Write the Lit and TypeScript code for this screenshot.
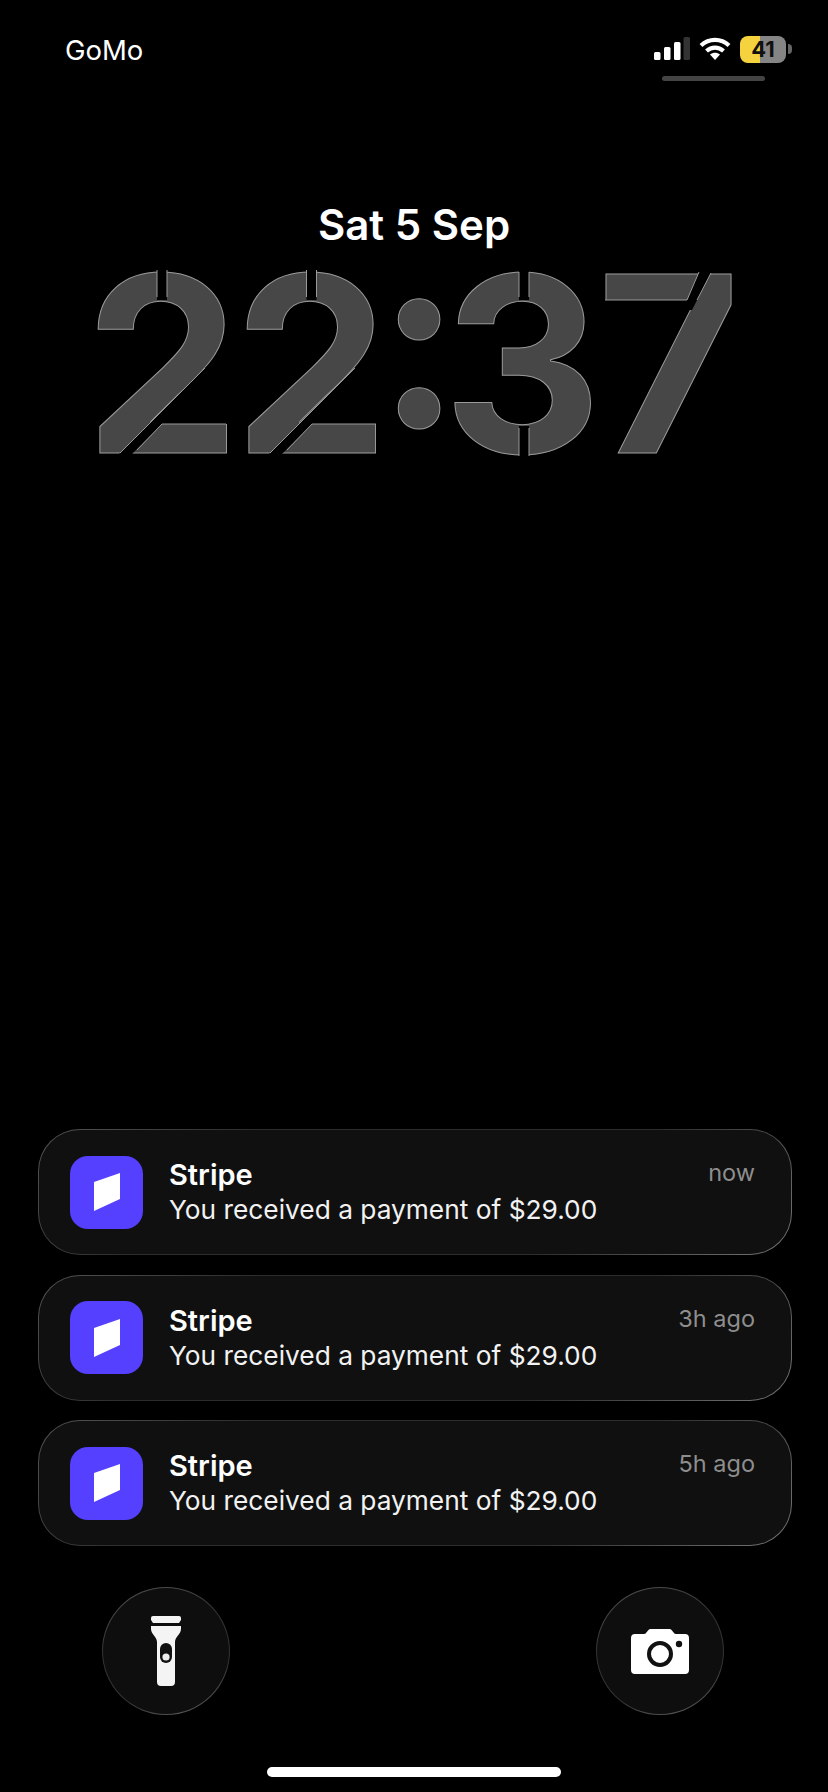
import { LitElement, html, css, svg } from "lit";
import { customElement } from "lit/decorators.js";

const NOTES = [
  { time: "now" },
  { time: "3h ago" },
  { time: "5h ago" },
];

// Stencil cuts laid over the real clock text, in page coordinates.
const SLOTS: string[] = [
  "157,262 167,262 167,300 157,300",
  "306.500,262 316.500,262 316.500,300 306.500,300",
  "519,262 529,262 529,300 519,300",
  "519,426 529,426 529,465 519,465",
  "112,461 128,458 162,424 240,424 240,333",
  "262,461 278,458 312,424 390,424 390,333",
  "703,262 716.500,262 692,310 683,310",
  "596,300 690,300 684,314 596,314",
];

// Edge highlights along those cuts: x1,y1,x2,y2
const EDGES: number[][] = [
  [157, 270, 157, 297], [167, 270, 167, 297],
  [306.5, 270, 306.5, 297], [316.5, 270, 316.5, 297],
  [519, 272, 519, 297], [529, 272, 529, 297],
  [519, 428, 519, 456], [529, 428, 529, 456],
  [120, 453, 205, 368], [137, 450, 162, 424], [162, 424, 226, 424],
  [270, 453, 355, 368], [287, 450, 312, 424], [312, 424, 376, 424],
  [699, 272, 687, 300], [711, 273, 697, 300], [605, 300, 687, 300],
];

@customElement("app-root")
export class AppRoot extends LitElement {
  static styles = css`
    :host {
      display: flex;
      flex-direction: column;
      width: 828px;
      height: 1792px;
      background: #000;
      color: #fff;
      font-family: Inter, "Noto Sans", sans-serif;
      overflow: hidden;
    }
    .status {
      display: flex;
      justify-content: space-between;
      align-items: flex-start;
      padding: 35px 36px 0 65px;
      height: 49px;
      box-sizing: content-box;
    }
    .carrier { font-size: 27.5px; line-height: 30px; }
    .right { display: flex; flex-direction: column; align-items: flex-start; gap: 13px; }
    .indicators { display: flex; align-items: center; gap: 9px; height: 28px; }
    .indicators svg { display: block; }
    .battery { display: flex; align-items: center; gap: 2px; }
    .cell {
      width: 46px; height: 27px; border-radius: 8px;
      background: linear-gradient(90deg, #f5d33f 0 43%, #858585 43% 100%);
      color: #111; font-size: 22px; font-weight: 700; line-height: 27px; text-align: center;
    }
    .nub { width: 4px; height: 10px; border-radius: 0 4px 4px 0; background: #666; }
    .pill { width: 103px; height: 5px; border-radius: 3px; background: #444; margin-left: 8px; }
    .date {
      margin-top: 117px;
      text-align: center; font-size: 42px; font-weight: 600; line-height: 48px;
    }
    .clock {
      position: relative;
      display: flex;
      height: 240px;
      margin-top: -5px;
      padding-left: 85px;
      box-sizing: border-box;
      font-size: 246px; font-weight: 700; line-height: 240px;
      color: #474747;
      -webkit-text-stroke: 1px #9a9a9a;
    }
    .clock .a { letter-spacing: -6px; }
    .clock .b { letter-spacing: -11px; }
    .clock .c { letter-spacing: -17px; margin-top: -26px; }
    .clock .e { letter-spacing: -5px; }
    .clock .cuts { position: absolute; left: 0; top: 0; }
    .spacer { flex: 1; }
    .list { display: flex; flex-direction: column; gap: 19.5px; padding: 0 36px 0 38px; }
    .card {
      display: flex; align-items: center; gap: 26px;
      height: 126px; box-sizing: border-box; padding: 0 36px 0 31px;
      border-radius: 42px;
      border: 1.5px solid transparent;
      background:
        linear-gradient(#101010, #101010) padding-box,
        linear-gradient(135deg, #555 0%, #2c2c2c 25%, #2c2c2c 70%, #777 100%) border-box;
    }
    .logo {
      width: 73px; height: 73px; border-radius: 18px; background: #5540ff;
      display: flex; align-items: center; justify-content: center; flex: none;
    }
    .body { flex: 1; display: flex; flex-direction: column; padding-top: 2px; }
    .head { display: flex; justify-content: space-between; align-items: flex-start; }
    .name { font-size: 29px; font-weight: 600; line-height: 34px; }
    .time { font-size: 23.5px; line-height: 30px; color: #8e8e8e; }
    .msg { font-size: 26.3px; line-height: 36px; color: #f2f2f2; }
    .actions { display: flex; justify-content: space-between; padding: 41px 104px 0 102px; }
    .round {
      width: 128px; height: 128px; box-sizing: border-box; border-radius: 50%;
      border: 1.5px solid transparent;
      background:
        linear-gradient(#0e0e0e, #0e0e0e) padding-box,
        linear-gradient(160deg, #555 0%, #333 40%, #333 70%, #666 100%) border-box;
      display: flex; align-items: center; justify-content: center;
    }
    .homebar { display: flex; justify-content: center; padding: 52px 0 15px; }
    .homebar i { display: block; width: 294px; height: 10px; border-radius: 5px; background: #fff; }
  `;

  private logo() {
    return html`<div class="logo"><svg width="26" height="38" viewBox="0 0 26 38"><path d="M0 9 26 0V26L0 38Z" fill="#fff"/></svg></div>`;
  }

  render() {
    return html`
      <div class="status">
        <div class="carrier">GoMo</div>
        <div class="right">
          <div class="indicators">
            <svg width="36" height="24" viewBox="0 0 36 24">
              <rect x="0" y="15" width="6.500" height="8" rx="1.5" fill="#fff"/>
              <rect x="10" y="10" width="6.500" height="13" rx="1.5" fill="#fff"/>
              <rect x="20" y="5" width="6.500" height="18" rx="1.5" fill="#fff"/>
              <rect x="29.500" y="0" width="6.500" height="23" rx="1.5" fill="#333"/>
            </svg>
            <svg width="32" height="24" viewBox="0 0 32 24" fill="none" stroke="#fff" stroke-width="4.2">
              <path d="M2 8.5C10 1 22 1 30 8.5"/>
              <path d="M7.5 14C12.5 9.5 19.5 9.5 24.5 14"/>
              <path d="M11 17.5 16 23 21 17.5C18 15 14 15 11 17.5Z" fill="#fff" stroke="none"/>
            </svg>
            <div class="battery"><div class="cell">41</div><div class="nub"></div></div>
          </div>
          <div class="pill"></div>
        </div>
      </div>
      <div class="date">Sat 5 Sep</div>
      <div class="clock">
        <span class="a">2</span><span class="b">2</span><span class="c">:</span><span class="e">3</span><span>7</span>
        <svg class="cuts" width="828" height="240" viewBox="0 244 828 240">
          ${SLOTS.map((p) => svg`<polygon points=${p} fill="#000"/>`)}
          ${EDGES.map((e) => svg`<line x1=${e[0]} y1=${e[1]} x2=${e[2]} y2=${e[3]} stroke="#9a9a9a" stroke-width="1"/>`)}
        </svg>
      </div>
      <div class="spacer"></div>
      <div class="list">
        ${NOTES.map(
          (n) => html`<div class="card">
            ${this.logo()}
            <div class="body">
              <div class="head"><div class="name">Stripe</div><div class="time">${n.time}</div></div>
              <div class="msg">You received a payment of $29.00</div>
            </div>
          </div>`
        )}
      </div>
      <div class="actions">
        <div class="round">
          <svg width="30" height="70" viewBox="0 0 30 70">
            <path d="M2 0H28a2 2 0 0 1 2 2V4L28 7H2L0 4V2a2 2 0 0 1 2-2Z" fill="#f4f4f4"/>
            <path fill="#f4f4f4" d="M0 10H30V13C30 18 24 21 24 26V66a4 4 0 0 1-4 4H10a4 4 0 0 1-4-4V26C6 21 0 18 0 13Z"/>
            <rect x="9" y="27" width="12" height="20" rx="6" fill="#111"/>
            <circle cx="15" cy="41" r="3.6" fill="#eee"/>
          </svg>
        </div>
        <div class="round">
          <svg width="58" height="46" viewBox="0 0 58 46">
            <path fill="#fff" d="M4 6H13C15 6 15.500 4 17 2.500 18 1.200 19 1 20 1H38C39 1 40 1.200 41 2.500 42.500 4 43 6 45 6H54a4 4 0 0 1 4 4V42a4 4 0 0 1-4 4H4a4 4 0 0 1-4-4V10a4 4 0 0 1 4-4Z"/>
            <circle cx="29" cy="26" r="11" fill="none" stroke="#111" stroke-width="4"/>
            <circle cx="48" cy="16" r="3.2" fill="#111"/>
          </svg>
        </div>
      </div>
      <div class="homebar"><i></i></div>
    `;
  }
}
